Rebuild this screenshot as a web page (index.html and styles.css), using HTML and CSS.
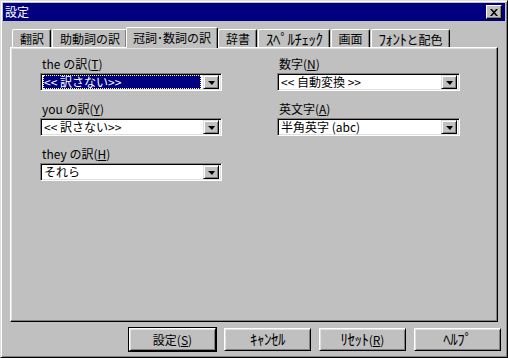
FILE: index.html
```html
<!DOCTYPE html>
<html lang="ja">
<head>
    <meta charset="UTF-8">
    <meta name="viewport" content="width=device-width, initial-scale=1">
    <link rel="stylesheet" href="styles.css">
</head>
<body>

<div class="window">
    <div class="titlebar">
        <span class="title">設定</span>
        <button class="close" type="button">
            <svg width="8" height="7" viewBox="0 0 8 7">
                <path d="M0 0h2l2 2.2L6 0h2L5 3.5 8 7H6L4 4.8 2 7H0l3-3.5z" fill="#000"/>
            </svg>
        </button>
    </div>

    <div class="tabs">
        <div class="tab">翻訳</div>
        <div class="tab">助動詞の訳</div>
        <div class="tab active">冠詞･数詞の訳</div>
        <div class="tab">辞書</div>
        <div class="tab"><span class="hw">ｽﾍﾟﾙﾁｪｯｸ</span></div>
        <div class="tab">画面</div>
        <div class="tab"><span class="hw">ﾌｫﾝﾄ</span>と配色</div>
    </div>

    <div class="panel">
        <div class="col">
            <div class="field">
                <label class="label">the の訳(<u>T</u>)</label>
                <div class="combo">
                    <span class="value"><span class="selected">&lt;&lt; 訳さない&gt;&gt;</span></span>
                    <span class="drop"></span>
                </div>
            </div>
            <div class="field">
                <label class="label">you の訳(<u>Y</u>)</label>
                <div class="combo">
                    <span class="value">&lt;&lt; 訳さない&gt;&gt;</span>
                    <span class="drop"></span>
                </div>
            </div>
            <div class="field">
                <label class="label">they の訳(<u>H</u>)</label>
                <div class="combo">
                    <span class="value">それら</span>
                    <span class="drop"></span>
                </div>
            </div>
        </div>
        <div class="col col-right">
            <div class="field">
                <label class="label">数字(<u>N</u>)</label>
                <div class="combo">
                    <span class="value">&lt;&lt; 自動変換 &gt;&gt;</span>
                    <span class="drop"></span>
                </div>
            </div>
            <div class="field">
                <label class="label">英文字(<u>A</u>)</label>
                <div class="combo">
                    <span class="value">半角英字 (abc)</span>
                    <span class="drop"></span>
                </div>
            </div>
        </div>
    </div>

    <div class="buttons">
        <button class="btn default" type="button">設定(<u>S</u>)</button>
        <button class="btn" type="button"><span class="hw">ｷｬﾝｾﾙ</span></button>
        <button class="btn" type="button"><span class="hw">ﾘｾｯﾄ</span>(<u>R</u>)</button>
        <button class="btn" type="button"><span class="hw">ﾍﾙﾌﾟ</span></button>
    </div>
</div>

</body>
</html>
```

FILE: styles.css
```css
* {
    box-sizing: border-box;
}

body {
    margin: 0;
    font-family: "Noto Sans CJK JP", "DejaVu Sans", sans-serif;
    font-size: 12px;
    line-height: 14px;
    color: #000;
    background: #c0c0c0;
}

u {
    text-decoration: underline;
    text-underline-offset: 1px;
}

/* half-width katakana look small in this font, bump them up */
.hw {
    font-size: 15px;
    letter-spacing: -0.5px;
}

.window {
    width: 508px;
    height: 358px;
    padding: 2px;
    background: #c0c0c0;
    border: 1px solid;
    border-color: #dfdfdf #000 #000 #dfdfdf;
    box-shadow: inset 1px 1px #fff, inset -1px -1px #808080;
}

/* title bar */
.titlebar {
    height: 18px;
    display: flex;
    align-items: center;
    justify-content: space-between;
    padding-left: 2px;
    padding-right: 3px;
    background: #000080;
    color: #fff;
}

.close {
    width: 16px;
    height: 14px;
    padding: 0;
    display: flex;
    align-items: center;
    justify-content: center;
    background: #c0c0c0;
    border: 1px solid;
    border-color: #fff #000 #000 #fff;
    box-shadow: inset -1px -1px #808080;
}

/* tabs */
.tabs {
    height: 20px;
    margin-top: 6px;
    padding-left: 9px;
    display: flex;
    align-items: flex-end;
}

.tab {
    position: relative;
    height: 18px;
    padding: 2px 6px 0 7px;
    border-left: 1px solid #fff;
    border-top: 1px solid #fff;
    border-right: 1px solid #000;
    border-radius: 2px 2px 0 0;
    box-shadow: inset -1px 0 #808080;
    white-space: nowrap;
}

.tab + .tab {
    margin-left: 1px;
}

.tab.active {
    height: 21px;
    margin: 0 -1px -1px -1px;
    padding: 3px 6px 0 6px;
    background: #c0c0c0;
    z-index: 1;
}

/* panel */
.panel {
    width: 488px;
    height: 275px;
    margin-left: 7px;
    padding: 9px 0 0 29px;
    display: flex;
    gap: 55px;
    border: 1px solid;
    border-color: #fff #000 #000 #fff;
    box-shadow: inset -1px -1px #808080, inset 1px 1px #dfdfdf;
}

.col {
    width: 182px;
    display: flex;
    flex-direction: column;
    gap: 11px;
}

.col-right {
    width: 183px;
}

.field {
    display: flex;
    flex-direction: column;
    gap: 2px;
}

.label {
    display: block;
    height: 14px;
    padding-left: 2px;
}

.combo {
    height: 18px;
    padding: 1px 2px 1px 1px;
    display: flex;
    background: #fff;
    border: 1px solid;
    border-color: #808080 #fff #fff #808080;
    box-shadow: inset 1px 1px #000, inset -1px -1px #dfdfdf;
}

.value {
    flex: 1;
    display: flex;
    align-items: center;
    padding-left: 2px;
    line-height: 14px;
    white-space: nowrap;
}

.selected {
    flex: 1;
    height: 14px;
    margin: 0 2px 0 -1px;
    padding-left: 1px;
    background: #000080;
    color: #fff;
    outline: 1px dotted #ffffa0;
    outline-offset: -1px;
}

.drop {
    width: 16px;
    height: 14px;
    display: flex;
    align-items: center;
    justify-content: center;
    background: #c0c0c0;
    border: 1px solid;
    border-color: #dfdfdf #000 #000 #dfdfdf;
    box-shadow: inset 1px 1px #fff, inset -1px -1px #808080;
}

.drop::after {
    content: "";
    border-left: 4px solid transparent;
    border-right: 3px solid transparent;
    border-top: 4px solid #000;
    margin-top: 1px;
}

/* buttons */
.buttons {
    width: 491px;
    margin: 6px 0 0 7px;
    display: flex;
    justify-content: flex-end;
    gap: 8px;
}

.btn {
    width: 87px;
    height: 23px;
    padding: 0;
    font-family: inherit;
    font-size: 12px;
    line-height: 14px;
    color: #000;
    background: #c0c0c0;
    border: 1px solid;
    border-color: #fff #000 #000 #fff;
    box-shadow: inset 1px 1px #dfdfdf, inset -1px -1px #808080;
}

.btn.default {
    outline: 1px solid #000;
}
```
